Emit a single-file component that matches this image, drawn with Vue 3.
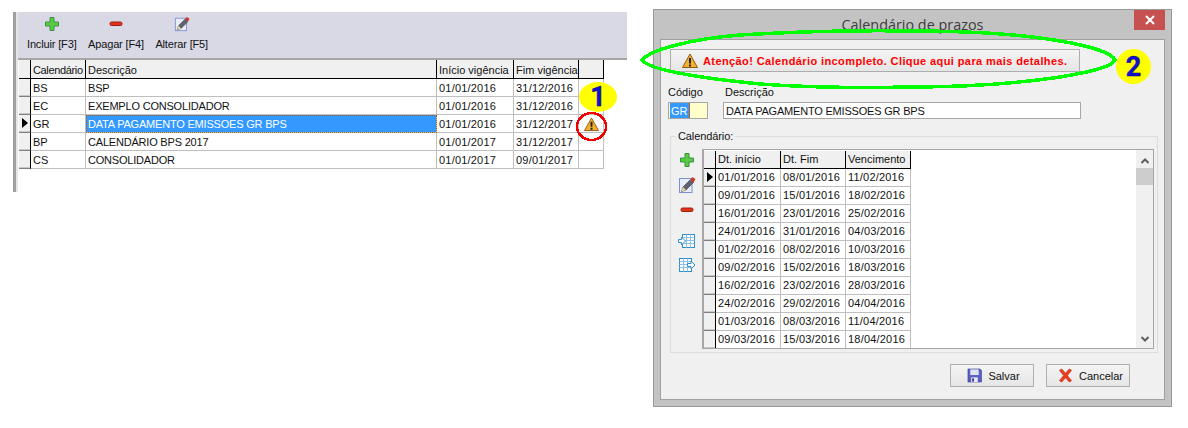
<template>
  <div class="page">
    <svg class="sprites" width="0" height="0">
      <symbol id="plus" viewBox="0 0 16 16">
        <path d="M6 1.500h4v4.500h4.500v4H10v4.500H6V10H1.500V6H6z" fill="#5cc84a" stroke="#35953a" />
      </symbol>
      <symbol id="minus" viewBox="0 0 16 16">
        <rect x="2" y="6" width="12" height="3.500" rx="1.500" fill="#e6301c" stroke="#96200f" />
      </symbol>
      <symbol id="edit" viewBox="0 0 18 18">
        <rect x="1.500" y="2.500" width="12.500" height="14" fill="#e6eefb" stroke="#7f8fd0" />
        <path d="M3.500 15.500l1.500-4.500 7.500-7.500 3 3L8 14z" fill="#62626e" stroke="#3a3a44" stroke-width=".6" />
        <path d="M3.500 15.500L5 11l3 3z" fill="#f0d8a0" />
        <path d="M12.500 3.500L14.500 1l3 2-2 3.500z" fill="#cc3a26" />
      </symbol>
      <symbol id="import" viewBox="0 0 18 18">
        <rect x="4.500" y="2.500" width="12" height="13" fill="#fff" stroke="#2f8fcc" />
        <path d="M4.500 5.500h12M8.500 2.500v13M12.500 2.500v13M4.500 8.500h12M4.500 11.500h12" stroke="#8cc0e4" fill="none" />
        <path d="M.5 7.500h3v-2.500l4 4-4 4v-2.500h-3z" fill="#fff" stroke="#2f8fcc" />
      </symbol>
      <symbol id="export" viewBox="0 0 18 18">
        <rect x="1.500" y="2.500" width="12" height="13" fill="#fff" stroke="#2f8fcc" />
        <path d="M1.500 5.500h12M5.500 2.500v13M9.500 2.500v13M1.500 8.500h12M1.500 11.500h12" stroke="#8cc0e4" fill="none" />
        <path d="M9.500 7.500h3.500v-2.500l4 4-4 4v-2.500H9.500z" fill="#fff" stroke="#2f8fcc" />
      </symbol>
      <symbol id="warn" viewBox="0 0 16 16">
        <path d="M8 1L15.500 14.500H.5z" fill="#f6b030" stroke="#8a5e10" stroke-linejoin="round" />
        <path d="M7 5h2v5.500H7zM7 11.500h2v2H7z" fill="#222" />
      </symbol>
      <symbol id="save" viewBox="0 0 16 16">
        <path d="M1 1h13l1.500 1.500V15H1z" fill="#5a5fc0" stroke="#3a3e90" stroke-width=".6" />
        <rect x="3.500" y="1.500" width="9" height="6" fill="#dfe2f2" />
        <rect x="4.500" y="10" width="7" height="5" fill="#e8e8f0" />
        <rect x="5.500" y="11" width="2" height="3.500" fill="#3a3e90" />
      </symbol>
      <symbol id="cancel" viewBox="0 0 16 16">
        <path d="M1.500 2.500L4 1l4 4.500L12 1l2.500 1.500L10 8l4.500 5.500L12 15 8 10.500 4 15l-2.500-1.500L6 8z" fill="#ef3a1c" stroke="#b02a10" stroke-width=".6" />
      </symbol>
    </svg>

    <section class="list-panel">
      <div class="toolbar">
        <button v-for="t in toolButtons" :key="t.label" class="tool-btn">
          <svg class="tool-ico"><use :href="'#' + t.icon" /></svg>
          <span>{{ t.label }}</span>
        </button>
      </div>

      <div class="list-grid">
        <div class="row head">
          <div class="ind"></div>
          <div class="cell tight">Calendário</div>
          <div class="cell">Descrição</div>
          <div class="cell">Início vigência</div>
          <div class="cell">Fim vigência</div>
          <div class="cell"></div>
        </div>
        <div v-for="r in calendars" :key="r.code" class="row">
          <div class="ind"><i v-if="r.selected" class="caret"></i></div>
          <div class="cell">{{ r.code }}</div>
          <div class="cell name" :class="{ selected: r.selected }">{{ r.name }}</div>
          <div class="cell date">{{ r.start }}</div>
          <div class="cell date">{{ r.end }}</div>
          <div class="cell warn-cell">
            <svg v-if="r.selected" class="warn-ico"><use href="#warn" /></svg>
          </div>
        </div>
      </div>
    </section>

    <section class="dialog">
      <header class="titlebar">
        <span></span>
        <span class="title">Calendário de prazos</span>
        <button class="close">
          <svg width="10" height="10" viewBox="0 0 10 10">
            <path d="M1 1l8 8M9 1l-8 8" stroke="#fff" stroke-width="2" />
          </svg>
        </button>
      </header>

      <div class="dialog-body">
        <button class="alert-btn">
          <svg class="alert-ico"><use href="#warn" /></svg>
          <span>Atenção! Calendário incompleto. Clique aqui para mais detalhes.</span>
        </button>

        <div class="fields">
          <label class="field code">
            <span>Código</span>
            <div class="input yellow"><span class="sel-text">GR</span></div>
          </label>
          <label class="field desc">
            <span>Descrição</span>
            <div class="input name">DATA PAGAMENTO EMISSOES GR BPS</div>
          </label>
        </div>

        <fieldset class="group">
          <legend>Calendário:</legend>
          <div class="group-inner">
            <div class="side-tools">
              <svg class="side-ico s1"><use href="#plus" /></svg>
              <svg class="side-ico s2"><use href="#edit" /></svg>
              <svg class="side-ico s3"><use href="#minus" /></svg>
              <svg class="side-ico s4"><use href="#import" /></svg>
              <svg class="side-ico s5"><use href="#export" /></svg>
            </div>
            <div class="period-frame">
              <div class="period-grid">
                <div class="prow head">
                  <div class="ind"></div>
                  <div class="cell">Dt. início</div>
                  <div class="cell">Dt. Fim</div>
                  <div class="cell">Vencimento</div>
                </div>
                <div v-for="(p, i) in periods" :key="p[0]" class="prow">
                  <div class="ind"><i v-if="i === 0" class="caret"></i></div>
                  <div class="cell date">{{ p[0] }}</div>
                  <div class="cell date">{{ p[1] }}</div>
                  <div class="cell date">{{ p[2] }}</div>
                </div>
              </div>
              <div class="scrollbar">
                <svg class="chev" width="8" height="6" viewBox="0 0 8 6">
                  <path d="M.5 5L4 1.500 7.500 5" fill="none" stroke="#606060" stroke-width="2" />
                </svg>
                <div class="thumb"></div>
                <svg class="chev down" width="8" height="6" viewBox="0 0 8 6">
                  <path d="M.5 1L4 4.500 7.500 1" fill="none" stroke="#606060" stroke-width="2" />
                </svg>
              </div>
            </div>
          </div>
        </fieldset>

        <div class="footer">
          <button class="act-btn save">
            <svg class="act-ico"><use href="#save" /></svg>
            Salvar
          </button>
          <button class="act-btn cancel">
            <svg class="act-ico"><use href="#cancel" /></svg>
            Cancelar
          </button>
        </div>
      </div>
    </section>

    <!-- marcações desenhadas por cima da captura -->
    <svg class="marks" width="1188" height="428" viewBox="0 0 1188 428">
      <path
        d="M642 60C650 50 690 39 740 35C790 32 850 30 910 31C960 31 1020 34 1060 41C1090 46 1112 53 1115 60C1112 67 1090 72 1060 77C1020 83 970 87 910 87C860 88 800 87 760 84C710 79 650 71 642 60Z"
        fill="none"
        stroke="#00ff00"
        stroke-width="3.500"
        shape-rendering="crispEdges"
      />
      <ellipse
        cx="591.500"
        cy="126.500"
        rx="14.500"
        ry="13.500"
        fill="none"
        stroke="#f00000"
        stroke-width="2.500"
        shape-rendering="crispEdges"
      />
    </svg>
    <div class="badge one">1</div>
    <div class="badge two">2</div>
  </div>
</template>

<script setup>
const toolButtons = [
  { icon: 'plus', label: 'Incluir [F3]' },
  { icon: 'minus', label: 'Apagar [F4]' },
  { icon: 'edit', label: 'Alterar [F5]' },
];

const calendars = [
  { code: 'BS', name: 'BSP', start: '01/01/2016', end: '31/12/2016' },
  { code: 'EC', name: 'EXEMPLO CONSOLIDADOR', start: '01/01/2016', end: '31/12/2016' },
  { code: 'GR', name: 'DATA PAGAMENTO EMISSOES GR BPS', start: '01/01/2016', end: '31/12/2017', selected: true },
  { code: 'BP', name: 'CALENDÁRIO BPS 2017', start: '01/01/2017', end: '31/12/2017' },
  { code: 'CS', name: 'CONSOLIDADOR', start: '01/01/2017', end: '09/01/2017' },
];

const periods = [
  ['01/01/2016', '08/01/2016', '11/02/2016'],
  ['09/01/2016', '15/01/2016', '18/02/2016'],
  ['16/01/2016', '23/01/2016', '25/02/2016'],
  ['24/01/2016', '31/01/2016', '04/03/2016'],
  ['01/02/2016', '08/02/2016', '10/03/2016'],
  ['09/02/2016', '15/02/2016', '18/03/2016'],
  ['16/02/2016', '23/02/2016', '28/03/2016'],
  ['24/02/2016', '29/02/2016', '04/04/2016'],
  ['01/03/2016', '08/03/2016', '11/04/2016'],
  ['09/03/2016', '15/03/2016', '18/04/2016'],
];
</script>

<style>
body {
  background: #fff;
}
</style>

<style scoped>
.page {
  position: relative;
  width: 1188px;
  height: 428px;
  display: flex;
  align-items: flex-start;
  gap: 26px;
  padding-left: 13px;
  box-sizing: border-box;
  overflow: hidden;
  font-family: "Liberation Sans", Arial, sans-serif;
  font-size: 11px;
  color: #111;
}

.sprites {
  position: absolute;
}

button {
  font: inherit;
  color: inherit;
  padding: 0;
  border: none;
  background: none;
}

/* lista de calendários */
.list-panel {
  width: 614px;
  height: 180px;
  margin-top: 12px;
  box-sizing: border-box;
  border-left: 3px solid #a0a0a0;
  padding-left: 2px;
  background: linear-gradient(#e6e6e6, #e6e6e6) no-repeat 0 0 / 2px 100%;
}

.toolbar {
  height: 46px;
  display: flex;
  gap: 11.500px;
  background: #d9d9e6;
  border-bottom: 2px solid #a6a6a6;
  padding-left: 9px;
}

.tool-btn {
  display: flex;
  flex-direction: column;
  align-items: center;
  gap: 6px;
  padding-top: 4px;
  letter-spacing: -0.15px;
}

.tool-ico {
  width: 16px;
  height: 16px;
}

.list-grid {
  margin: 0 0 0 1px;
  width: 585px;
}

.row {
  display: grid;
  grid-template-columns: 12px 55px 351px 77px 65px 25px;
  height: 18px;
}

.prow {
  display: grid;
  grid-template-columns: 12px 65px 65px 65px;
  height: 18px;
}

.cell {
  box-sizing: border-box;
  padding: 2px 0 0 2px;
  line-height: 15px;
  white-space: nowrap;
  overflow: hidden;
  border-right: 1px solid #bfbfbf;
  border-bottom: 1px solid #bfbfbf;
  background: #fff;
}

.row.head .cell {
  padding-top: 3px;
}

.prow .cell {
  padding-top: 1px;
}

.date {
  letter-spacing: 0.2px;
}

.name {
  letter-spacing: -0.2px;
}

.tight {
  letter-spacing: -0.35px;
}

.ind {
  box-sizing: border-box;
  position: relative;
  background: #f0f0f0;
  border-right: 1px solid #000;
  border-bottom: 1px solid #808080;
  box-shadow: inset 0 -1px #c8c8c8;
}

.head .cell,
.head .ind {
  background: #f0f0f0;
  border-right-color: #000;
  border-bottom-color: #000;
  box-shadow: none;
}

.row.head {
  height: 19px;
}

.caret {
  position: absolute;
  left: 3px;
  top: 3px;
  border-left: 6px solid #000;
  border-top: 5.500px solid transparent;
  border-bottom: 5.500px solid transparent;
}

.selected {
  background: #3399ff;
  color: #fff;
  outline: 1px dotted #a85a10;
  outline-offset: -1px;
}

.warn-cell {
  padding: 0;
  overflow: visible;
}

.warn-ico {
  display: block;
  width: 15px;
  height: 15px;
  margin: 2px 0 0 5px;
}

/* janela */
.dialog {
  width: 519px;
  height: 398px;
  margin-top: 9px;
  box-sizing: border-box;
  border: 1px solid #999;
  background: #c3c3c3;
  padding: 0 6px 6px;
  display: flex;
  flex-direction: column;
}

.titlebar {
  height: 29px;
  flex: none;
  display: grid;
  grid-template-columns: 1fr auto 1fr;
}

.title {
  font-family: "Open Sans", sans-serif;
  font-size: 14.400px;
  color: #3c3c3c;
  line-height: 29px;
}

.close {
  justify-self: end;
  width: 31px;
  height: 20px;
  background: #c75050;
  display: flex;
  align-items: center;
  justify-content: center;
}

.dialog-body {
  flex: 1;
  border: 1px solid #a0a0a0;
  background: #f0f0f0;
  padding: 9px 7px 0 7px;
  box-sizing: border-box;
  display: flex;
  flex-direction: column;
  align-items: flex-start;
}

.alert-btn {
  margin-left: 2px;
  width: 410px;
  height: 23px;
  box-sizing: border-box;
  border: 1px solid #adadad;
  background: linear-gradient(#f4f4f4, #e6e6e6);
  display: flex;
  align-items: center;
  padding-left: 11px;
  gap: 5px;
  color: #f00;
  font-weight: bold;
  letter-spacing: 0.4px;
}

.alert-ico {
  width: 16px;
  height: 16px;
}

.fields {
  display: flex;
  gap: 15px;
  margin-top: 14px;
}

.field {
  display: flex;
  flex-direction: column;
  gap: 2px;
}

.field > span {
  line-height: 13px;
  margin-bottom: 1px;
}

.desc > span {
  padding-left: 2px;
}

.input {
  box-sizing: border-box;
  height: 17px;
  border: 1px solid #a6a6a6;
  background: #fff;
  padding-left: 2px;
  line-height: 17px;
  width: 358px;
}

.input.yellow {
  width: 40px;
  background: #ffffcc;
  padding-left: 1px;
  line-height: 15px;
}

.sel-text {
  display: inline-block;
  background: #3399ff;
  color: #fff;
  padding: 0 1px;
  height: 15px;
  line-height: 16px;
  border-right: 1px solid #c05a10;
}

.group {
  margin: 11px 0 0 2px;
  padding: 0;
  width: 488px;
  height: 223px;
  box-sizing: border-box;
  border: 1px solid #dcdcdc;
  min-width: 0;
}

.group legend {
  margin-left: 5px;
  padding: 0 2px;
  line-height: 13px;
  letter-spacing: -0.1px;
}

.group-inner {
  display: flex;
  padding-top: 6px;
}

.side-tools {
  width: 31px;
  flex: none;
  display: flex;
  flex-direction: column;
  align-items: center;
  padding-top: 3px;
}

.side-ico {
  width: 16px;
  height: 16px;
  flex: none;
  margin-left: 1px;
}

.s2 {
  width: 18px;
  height: 18px;
  margin-top: 8px;
}

.s3 {
  margin-top: 8px;
}

.s4 {
  width: 18px;
  height: 18px;
  margin-top: 14px;
}

.s5 {
  width: 18px;
  height: 18px;
  margin-top: 6px;
}

.period-frame {
  width: 452px;
  height: 200px;
  box-sizing: border-box;
  border: 1px solid #a6a6a6;
  border-left-width: 2px;
  background: #fff;
  display: flex;
  justify-content: space-between;
  overflow: hidden;
  padding-top: 1px;
}

.period-grid {
  width: 207px;
}

.prow.head {
  height: 18px;
}

.scrollbar {
  width: 17px;
  margin-top: -1px;
  background: #f0f0f0;
  display: flex;
  flex-direction: column;
  align-items: center;
}

.chev {
  margin-top: 8px;
  flex: none;
}

.chev.down {
  margin-top: auto;
  margin-bottom: 6px;
}

.thumb {
  width: 17px;
  height: 17px;
  background: #cdcdcd;
  margin-top: 4px;
}

.footer {
  width: 100%;
  display: flex;
  justify-content: flex-end;
  gap: 12px;
  margin-top: 11px;
  padding-right: 27px;
  box-sizing: border-box;
}

.act-btn {
  width: 84px;
  height: 23px;
  box-sizing: border-box;
  border: 1px solid #adadad;
  background: linear-gradient(#f4f4f4, #e6e6e6);
  display: flex;
  align-items: center;
  justify-content: center;
  gap: 6px;
  font-size: 11px;
}

.save {
  padding-left: 3px;
}

.cancel {
  padding-left: 5px;
}

.act-ico {
  width: 15px;
  height: 15px;
}

/* marcações */
.marks {
  position: absolute;
  left: 0;
  top: 0;
  pointer-events: none;
}

.badge {
  position: absolute;
  display: flex;
  align-items: center;
  justify-content: center;
  background: #ffff00;
  color: #1010d8;
  font-family: Roboto, "Liberation Sans", sans-serif;
  font-weight: bold;
  font-size: 27px;
  border-radius: 50%;
  -webkit-text-stroke: 0.4px #000060;
}

.one {
  left: 579px;
  top: 82px;
  width: 38px;
  height: 30px;
}

.two {
  left: 1116px;
  top: 49px;
  width: 35px;
  height: 35px;
}
</style>
